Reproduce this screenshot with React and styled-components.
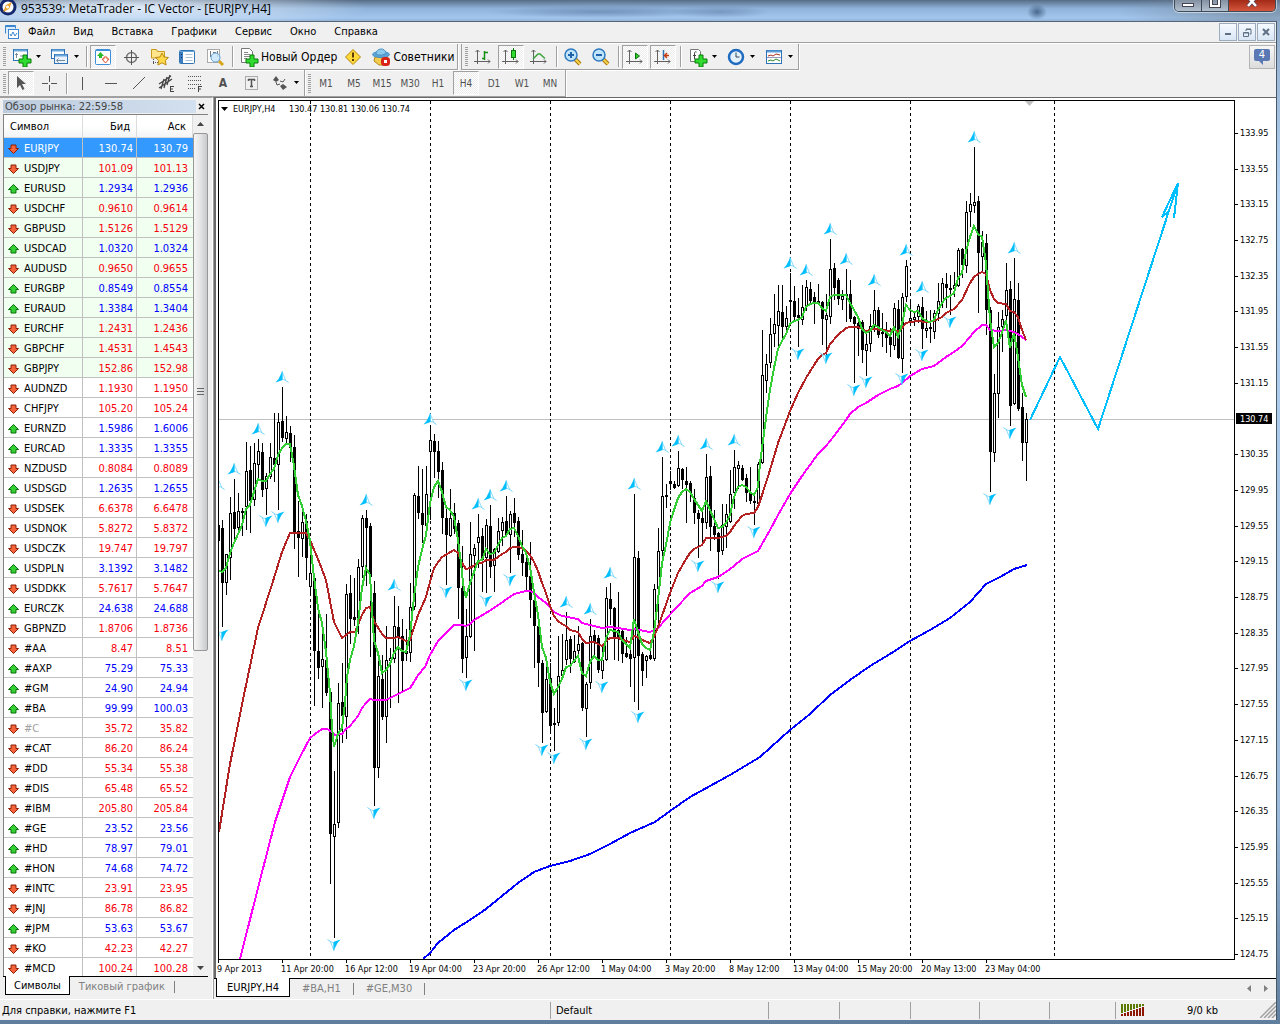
import React, { useState } from 'react';
import styled, { createGlobalStyle, css } from 'styled-components';

const GlobalStyle = createGlobalStyle`
  * { box-sizing: border-box; }
  body {
    margin: 0;
    overflow: hidden;
    background: #f0f0f0;
    color: #000;
    font-family: "DejaVu Sans Condensed", "Noto Sans", sans-serif;
    font-size: 11px;
  }
  button, input { font: inherit; color: inherit; }
  svg { display: block; flex: none; }
`;

const Window = styled.div`
  display: flex;
  flex-direction: column;
  height: 100vh;
  background: linear-gradient(#8fa9c6, #b4d4f4 20%, #9bb9d8 80%, #5f7d9d);
`;

/* ---------- title bar ---------- */
const TitleBar = styled.header`
  display: flex;
  flex: none;
  align-items: flex-start;
  height: 21px;
  overflow: hidden;
  font-family: "Open Sans", "Noto Sans", sans-serif;
  font-size: 12px;
  background:
    radial-gradient(ellipse 240px 22px at 130px 8px, rgba(235, 243, 252, 0.9), transparent),
    radial-gradient(ellipse 110px 6px at 600px 12px, rgba(60, 90, 130, 0.4), transparent),
    radial-gradient(ellipse 50px 6px at 720px 12px, rgba(60, 90, 130, 0.35), transparent),
    radial-gradient(ellipse 10px 8px at 1037px 12px, rgba(20, 50, 80, 0.6), transparent),
    radial-gradient(ellipse 140px 22px at 1260px 12px, rgba(120, 140, 160, 0.8), transparent),
    linear-gradient(#566c85, #8fb2d9 40%, #a3c6ee 85%, #93b3d6);
`;

const TitleText = styled.h1`
  flex: 1;
  margin: 0 0 0 4px;
  font-size: 12px;
  font-weight: 400;
  line-height: 17px;
`;

const CaptionButtons = styled.div`
  display: flex;
  height: 12px;
  margin-right: 4px;
  border: 1px solid #3d4a58;
  border-top: 0;
  border-radius: 0 0 5px 5px;
  overflow: hidden;
  box-shadow: 0 0 0 1px rgba(255, 255, 255, 0.5);
`;

const CaptionButton = styled.button`
  display: flex;
  justify-content: center;
  width: ${p => (p.$close ? 46 : 27)}px;
  padding: 0;
  border: 0;
  border-right: 1px solid #3d4a58;
  background: ${p => (p.$close ? 'linear-gradient(#a32a16, #d4553d)' : 'linear-gradient(#8290a2, #b3c0ce)')};
  &:last-child { border-right: 0; }
`;

const Frame = styled.main`
  display: flex;
  flex: 1;
  flex-direction: column;
  min-height: 0;
  margin: 0 3px 4px 0;
  border-top: 1px solid #566579;
  border-right: 1px solid #46586c;
  background: #f0f0f0;
`;

/* ---------- menu ---------- */
const MenuBar = styled.nav`
  display: flex;
  flex: none;
  align-items: center;
  height: 21px;
  padding: 0 1px 0 5px;
  border-bottom: 1px solid #a0a0a0;
`;

const MenuItems = styled.div`
  display: flex;
  gap: 18px;
  margin-left: 9px;
`;

const MenuItem = styled.button`
  padding: 0;
  border: 0;
  background: none;
  line-height: 16px;
`;

const MdiButtons = styled.div`
  display: flex;
  gap: 1px;
  margin-left: auto;
`;

const MdiButton = styled.button`
  display: flex;
  align-items: center;
  justify-content: center;
  width: 18px;
  height: 18px;
  padding: 0;
  border: 1px solid #9dacbc;
  background: linear-gradient(#f6faff, #d9e6f5);
`;

/* ---------- toolbars ---------- */
const ToolRow = styled.div`
  display: flex;
  flex: none;
  height: 27px;
  border-top: ${p => (p.$first ? '1px solid #fff' : 0)};
`;

const ToolGroup = styled.div`
  display: flex;
  align-items: center;
  margin-left: ${p => (p.$spaced ? 3 : 0)}px;
  padding-left: 3px;
  border-left: ${p => (p.$spaced ? '1px solid #a0a0a0' : 0)};
  border-right: 1px solid #a0a0a0;
  border-bottom: 1px solid #a0a0a0;
  box-shadow: 1px 1px 0 #fff;
`;

const Grip = styled.span`
  width: 3px;
  height: 19px;
  margin-right: 2px;
  background: repeating-linear-gradient(#a0a0a0 0 1px, transparent 1px 2px);
`;

const Sep = styled.span`
  width: 2px;
  height: 21px;
  margin: 0 2px;
  border-left: 1px solid #a0a0a0;
  border-right: 1px solid #fff;
`;

const pressed = css`
  border-color: #a0a0a0 #fff #fff #a0a0a0;
  background: repeating-conic-gradient(#fff 0 25%, #ececec 0 50%) 0 0 / 2px 2px;
`;

const ToolButton = styled.button`
  display: flex;
  flex: none;
  align-items: center;
  justify-content: center;
  gap: 4px;
  width: ${p => (p.$wide ? 38 : 26)}px;
  height: 24px;
  margin-right: ${p => (p.$wide ? 0 : 2)}px;
  padding: 0;
  border: 1px solid transparent;
  background: none;
  color: #505050;
  font-size: 10px;
  ${p => p.$pressed && pressed}
`;

const LabelButton = styled(ToolButton)`
  gap: 2px;
  width: auto;
  margin: 0;
  padding: 0 2px;
  color: #000;
  font-size: 12px;
`;

const Caret = () => (
  <svg width="6" height="4" aria-hidden="true"><path d="M0 0h5l-2.500 3z" fill="#000" /></svg>
);

/* ---------- body ---------- */
const Body = styled.div`
  display: flex;
  flex: 1;
  min-height: 0;
`;

const Side = styled.aside`
  display: flex;
  flex: none;
  flex-direction: column;
  width: 213px;
  padding: 1px 4px 5px 3px;
  border-top: 1px solid #a0a0a0;
  border-right: 1px solid #fff;
`;

const SideTitle = styled.div`
  display: flex;
  align-items: center;
  justify-content: space-between;
  height: 15px;
`;

const SideCaption = styled.h2`
  width: 193px;
  margin: 0;
  padding-left: 2px;
  background: linear-gradient(90deg, #bccbdd, #d2e0ef);
  color: #444;
  font-size: 11px;
  font-weight: 400;
  line-height: 13px;
`;

const CloseX = styled.button`
  width: 10px;
  height: 12px;
  padding: 0;
  border: 0;
  background: none;
`;

const WatchBox = styled.div`
  display: flex;
  flex: 1 1 0;
  min-height: 0;
  overflow: hidden;
  border-top: 1px solid #828282;
  border-left: 1px solid #828282;
`;

const QuoteTable = styled.table`
  width: 189px;
  table-layout: fixed;
  align-self: flex-start;
  border-collapse: separate;
  border-spacing: 0;
`;

const HeadCell = styled.th`
  width: ${p => p.$w}px;
  height: 23px;
  padding: 0 ${p => (p.$right ? 6 : 0)}px 0 ${p => (p.$right ? 0 : 6)}px;
  border-right: 1px solid #dcdcdc;
  border-bottom: 1px solid #d5d5d5;
  background: linear-gradient(#fff, #fff 50%, #f3f4f6);
  font-weight: 400;
  text-align: ${p => (p.$right ? 'right' : 'left')};
`;

const Cell = styled.td`
  height: 20px;
  padding: 2px ${p => (p.$last ? 5 : 3)}px 0 0;
  border-right: ${p => (p.$last ? 0 : '1px solid #c0c0c0')};
  border-bottom: 1px solid #c0c0c0;
  text-align: right;
  line-height: 17px;
`;

const SymbolCell = styled(Cell)`
  text-align: left;
  & > span { display: flex; align-items: center; gap: 5px; padding-left: 4px; }
`;

const Row = styled.tr`
  background: ${p => (p.$selected ? '#3399ff' : p.$major ? '#f0fff0' : '#fff')};
  color: ${p => (p.$selected ? '#fff' : p.$up ? '#0000ff' : '#f8000c')};
  ${SymbolCell} { color: ${p => (p.$selected ? '#fff' : p.$muted ? '#a0a0a0' : '#000')}; }
`;

const ScrollTrack = styled.div`
  display: flex;
  flex-direction: column;
  align-items: center;
  justify-content: space-between;
  width: 16px;
  padding: 7px 0 5px;
  background: #f0f0f0;
`;

const Thumb = styled.div`
  display: flex;
  align-items: center;
  justify-content: center;
  width: 15px;
  height: 61%;
  margin-top: 6px;
  margin-bottom: auto;
  border: 1px solid #979797;
  border-radius: 2px;
  background: linear-gradient(90deg, #f5f5f5, #e4e4e6 50%, #c8c9cc);
`;

const TabStrip = styled.div`
  display: flex;
  flex: none;
  height: ${p => (p.$side ? 18 : 19)}px;
  border-top: 1px solid #000;
  padding-left: 2px;
`;

const Tab = styled.button`
  height: ${p => (p.$active ? 19 : 17)}px;
  margin-top: ${p => (p.$active ? -1 : 1)}px;
  padding: 0 ${p => p.$pad}px;
  border: 1px solid ${p => (p.$active ? '#000' : 'transparent')};
  border-top: 0;
  background: ${p => (p.$active ? '#fff' : 'none')};
  color: ${p => (p.$active ? '#000' : '#808080')};
  white-space: nowrap;
  line-height: 15px;
`;

const TabDivider = styled.span`
  width: 1px;
  height: 12px;
  margin-top: 4px;
  background: #808080;
`;

const TabScroll = styled.span`
  display: flex;
  gap: 12px;
  align-items: center;
  margin: 0 7px 0 auto;
`;

const ChartPane = styled.section`
  display: flex;
  flex: 1;
  flex-direction: column;
  min-width: 0;
  padding-bottom: 2px;
  border-top: 1px solid #696969;
  border-left: 1px solid #a0a0a0;
`;

const ChartBox = styled.div`
  flex: 1;
  min-height: 0;
  border-left: 2px solid #696969;
  background: #fff;
  & > svg { width: 100%; height: 100%; }
`;

/* ---------- status bar ---------- */
const StatusBar = styled.footer`
  display: flex;
  flex: none;
  align-items: center;
  height: 21px;
  border-top: 1px solid #fff;
`;

const StatusField = styled.div`
  display: flex;
  flex: ${p => (p.$w ? 'none' : 1)};
  align-items: center;
  width: ${p => (p.$w ? p.$w + 'px' : 'auto')};
  height: 17px;
  padding-left: ${p => (p.$w ? 5 : 2)}px;
  border-left: ${p => (p.$w ? '1px solid #a0a0a0' : 0)};
`;

const Traffic = styled.span`
  flex: 1;
  text-align: center;
`;

/* ---------- data ---------- */
// symbol, bid, ask, 1 = price went up
const quotes = [
  ['EURJPY', '130.74', '130.79', 0], ['USDJPY', '101.09', '101.13', 0], ['EURUSD', '1.2934', '1.2936', 1],
  ['USDCHF', '0.9610', '0.9614', 0], ['GBPUSD', '1.5126', '1.5129', 0], ['USDCAD', '1.0320', '1.0324', 1],
  ['AUDUSD', '0.9650', '0.9655', 0], ['EURGBP', '0.8549', '0.8554', 1], ['EURAUD', '1.3384', '1.3404', 1],
  ['EURCHF', '1.2431', '1.2436', 0], ['GBPCHF', '1.4531', '1.4543', 0], ['GBPJPY', '152.86', '152.98', 0],
  ['AUDNZD', '1.1930', '1.1950', 0], ['CHFJPY', '105.20', '105.24', 0], ['EURNZD', '1.5986', '1.6006', 1],
  ['EURCAD', '1.3335', '1.3355', 1], ['NZDUSD', '0.8084', '0.8089', 0], ['USDSGD', '1.2635', '1.2655', 1],
  ['USDSEK', '6.6378', '6.6478', 0], ['USDNOK', '5.8272', '5.8372', 0], ['USDCZK', '19.747', '19.797', 0],
  ['USDPLN', '3.1392', '3.1482', 1], ['USDDKK', '5.7617', '5.7647', 0], ['EURCZK', '24.638', '24.688', 1],
  ['GBPNZD', '1.8706', '1.8736', 0], ['#AA', '8.47', '8.51', 0], ['#AXP', '75.29', '75.33', 1],
  ['#GM', '24.90', '24.94', 1], ['#BA', '99.99', '100.03', 1], ['#C', '35.72', '35.82', 0],
  ['#CAT', '86.20', '86.24', 0], ['#DD', '55.34', '55.38', 0], ['#DIS', '65.48', '65.52', 0],
  ['#IBM', '205.80', '205.84', 0], ['#GE', '23.52', '23.56', 1], ['#HD', '78.97', '79.01', 1],
  ['#HON', '74.68', '74.72', 1], ['#INTC', '23.91', '23.95', 0], ['#JNJ', '86.78', '86.82', 0],
  ['#JPM', '53.63', '53.67', 1], ['#KO', '42.23', '42.27', 0], ['#MCD', '100.24', '100.28', 0],
];

// high, body top, body bottom, low (chart y), 1 = rising bar
const bars = [
  [493,525,541,542,0],[520,528,583,627,0],[554,554,583,595,1],[497,513,558,580,1],[479,512,529,541,0],
  [493,511,528,532,1],[508,511,513,536,0],[442,471,507,530,1],[446,470,501,533,0],[443,463,500,506,1],
  [439,451,465,480,1],[443,452,490,497,0],[473,476,489,515,1],[443,457,477,479,1],[413,458,465,482,0],
  [413,422,465,510,1],[387,421,438,442,0],[416,432,439,445,1],[426,433,448,462,0],[435,447,532,549,0],
  [501,531,538,577,0],[505,522,539,557,1],[514,521,558,580,0],[547,573,587,596,1],[573,578,651,706,0],
  [610,651,668,679,0],[630,659,667,708,1],[614,660,693,696,0],[690,692,834,884,0],[771,824,837,938,1],
  [683,703,823,828,1],[663,702,716,743,0],[584,594,717,739,1],[575,593,619,644,0],[578,617,620,626,0],
  [559,567,618,634,1],[515,518,567,578,1],[510,518,528,586,0],[523,526,577,657,0],[581,593,768,806,0],
  [655,676,768,778,1],[655,679,717,720,0],[626,660,717,743,1],[648,658,661,708,1],[596,626,659,663,1],
  [606,627,637,703,0],[619,636,661,691,0],[629,651,654,661,1],[583,607,653,662,1],[493,495,607,610,1],
  [466,496,513,519,0],[469,513,525,543,0],[466,494,526,530,1],[428,440,452,520,1],[434,441,452,478,0],
  [441,451,472,498,0],[462,470,518,534,0],[509,518,535,585,0],[489,518,536,537,1],[503,513,529,534,0],
  [520,523,588,619,0],[546,588,659,673,0],[609,636,658,678,1],[522,554,637,638,1],[544,548,556,651,1],
  [514,537,543,568,1],[528,536,560,592,0],[519,525,558,593,1],[505,526,567,578,0],[548,549,566,592,1],
  [518,531,552,553,1],[517,522,531,546,1],[496,521,535,535,0],[511,514,535,573,1],[498,513,523,537,0],
  [517,521,555,560,0],[530,554,563,576,0],[550,562,577,592,0],[542,576,600,618,0],[591,600,626,668,0],
  [613,626,663,687,0],[660,663,713,743,0],[663,679,712,713,1],[663,678,726,732,0],[708,723,725,751,0],
  [636,676,723,726,1],[634,670,676,680,1],[612,640,660,665,1],[636,639,659,673,0],[635,651,662,663,1],
  [626,644,651,657,1],[642,643,708,711,0],[682,684,709,737,1],[619,636,683,689,1],[630,635,642,656,0],
  [635,638,670,673,0],[646,660,671,679,1],[587,598,660,661,1],[583,599,609,625,0],[607,608,637,660,0],
  [592,630,637,661,0],[628,631,654,663,0],[637,653,657,658,0],[650,654,659,687,0],[494,557,658,702,1],
  [551,558,656,710,0],[652,654,671,686,0],[655,656,661,678,1],[650,655,659,660,0],[584,589,659,661,1],
  [528,551,589,625,1],[457,496,551,560,1],[484,495,497,508,0],[471,481,484,490,0],[481,484,488,489,0],
  [451,468,486,487,1],[468,469,480,489,0],[467,481,485,523,0],[481,483,493,502,0],[489,498,513,524,0],
  [510,513,519,558,0],[512,518,523,546,0],[454,477,523,529,1],[466,476,527,551,0],[510,526,535,540,0],
  [532,533,552,579,0],[504,525,551,555,1],[504,514,527,548,1],[470,494,522,523,1],[450,467,493,509,1],
  [461,465,469,489,1],[465,468,480,481,0],[474,478,493,502,0],[467,493,501,504,0],[493,501,503,525,0],
  [462,464,504,507,1],[330,375,463,464,1],[354,364,381,393,1],[318,334,363,368,1],[294,324,334,347,1],
  [285,311,326,348,1],[285,312,327,338,0],[306,318,327,335,1],[273,300,302,325,0],[286,301,317,322,0],
  [298,315,318,347,0],[285,307,320,325,1],[280,287,307,311,1],[282,289,301,303,0],[292,297,303,324,0],
  [284,301,304,305,0],[301,302,319,345,0],[294,315,320,355,1],[239,269,317,324,1],[263,268,288,300,0],
  [278,280,299,305,0],[290,296,300,310,1],[269,294,296,322,0],[280,294,319,322,0],[316,317,324,383,0],
  [322,323,329,356,0],[320,322,350,363,0],[333,344,351,376,1],[314,326,344,352,1],[290,310,326,332,1],
  [307,310,335,338,0],[313,332,334,347,1],[322,333,338,353,0],[328,337,345,357,0],[303,308,346,350,1],
  [300,309,358,359,0],[293,297,359,373,1],[260,266,297,302,1],[300,318,321,325,1],[312,317,320,326,1],
  [304,306,317,323,1],[297,307,329,349,0],[311,328,331,338,1],[310,327,329,343,1],[310,313,332,339,1],
  [283,301,314,321,1],[278,283,302,308,1],[273,284,288,308,0],[275,288,290,315,0],[272,285,289,297,1],
  [248,250,286,287,1],[248,249,265,278,0],[201,212,266,273,1],[193,204,212,227,1],[147,202,206,213,1],
  [196,201,253,313,0],[231,242,257,273,1],[234,243,310,335,0],[307,310,452,492,0],[374,393,453,462,1],
  [312,327,394,418,1],[310,319,327,352,1],[263,290,316,320,1],[281,289,406,426,0],[258,299,404,405,1],
  [283,300,409,411,0],[393,407,443,461,0],[413,419,443,481,1],
];

const averages = [
  { color: '#0000ff', points: '423,959 430,953 438,943 454,930 470,920 486,909 502,896 518,883 534,872 550,866 570,861 590,854 610,844 630,833 655,822 670,811 690,797 710,786 730,775 760,757 780,739 790,730 810,714 830,695 850,680 870,666 890,654 910,641 930,630 950,618 970,602 986,584 1000,577 1014,569 1027,565' },
  { color: '#ff00ff', points: '240,959 260,880 275,822 290,777 300,757 310,738 315,734 322,729 327,729 332,732 335,735 342,734 346,729 350,726 354,721 358,716 362,708 366,703 370,699 374,700 386,700 390,698 410,688 414,682 418,675 425,667 430,655 438,641 446,633 454,625 462,625 466,626 470,624 474,620 486,613 494,608 514,594 526,591 530,591 534,593 538,597 546,603 554,612 562,616 578,619 582,623 602,628 610,627 618,628 630,630 634,629 650,632 658,628 675,609 690,593 702,586 706,581 718,577 726,572 734,566 742,559 758,551 762,544 770,530 778,515 790,494 802,476 818,454 826,446 834,436 846,420 850,414 858,407 866,403 878,395 890,389 898,386 902,383 910,376 922,369 934,366 946,357 954,352 962,346 970,337 974,332 982,325 986,325 990,330 998,331 1006,330 1014,332 1018,334 1022,337 1026,340' },
  { color: '#b22222', points: '219,832 230,764 245,690 258,628 274,578 282,552 290,533 306,533 310,540 318,559 326,580 334,622 342,638 350,632 355,632 362,615 366,608 370,607 374,621 382,634 386,638 394,638 398,637 406,641 410,640 418,615 426,597 430,582 434,568 442,557 454,550 458,553 462,563 466,569 470,568 478,563 482,563 486,560 494,560 502,554 506,552 510,548 514,547 518,547 522,548 526,551 530,555 534,562 538,571 542,583 546,593 550,606 554,616 558,621 562,624 566,626 570,630 578,632 582,639 586,643 594,642 602,646 606,641 610,638 618,638 626,641 630,642 634,636 638,637 642,640 650,643 654,637 658,627 670,593 678,573 686,559 690,553 694,549 702,545 706,538 718,538 726,536 730,532 734,526 742,516 746,514 754,513 758,507 762,495 770,470 778,443 786,422 790,411 798,393 806,378 814,365 818,359 822,355 826,353 830,344 838,335 846,328 850,327 858,327 862,329 866,331 874,329 882,330 890,331 894,329 898,332 902,328 906,323 910,322 918,321 926,322 934,321 942,317 946,313 954,309 962,300 970,283 974,277 978,274 982,272 986,274 990,290 994,299 998,303 1006,304 1010,311 1014,312 1018,317 1022,330 1026,340' },
  { color: '#32cd32', points: '218,570 222,572 226,568 230,553 234,543 238,534 242,525 246,509 250,505 254,492 258,479 262,481 266,481 270,474 274,469 278,455 282,448 286,444 290,444 294,466 298,495 302,506 306,521 310,541 314,577 318,608 322,623 326,652 330,693 332,727 334,747 338,734 342,728 345,703 347,677 350,660 354,646 358,623 362,588 366,568 370,575 372,610 374,640 378,653 382,673 386,670 390,664 394,653 398,647 402,651 406,652 410,635 414,597 418,567 422,550 426,535 430,503 434,487 438,481 442,492 446,507 450,510 454,517 458,540 461,563 463,583 466,598 470,583 474,572 478,561 482,560 486,549 490,554 494,553 498,545 502,538 506,536 510,529 514,528 518,536 522,546 526,553 530,567 534,592 538,615 542,647 546,658 550,682 554,694 558,687 562,679 566,667 570,666 574,661 578,656 582,673 586,676 590,662 594,656 598,660 602,660 606,638 610,630 614,631 618,632 622,640 626,644 630,648 634,619 638,632 642,644 646,648 650,650 654,632 658,600 662,563 666,545 670,523 674,510 678,498 682,492 686,489 690,492 694,499 698,505 702,511 706,501 710,510 714,519 718,528 722,527 726,523 730,515 734,497 738,487 742,485 746,487 750,492 754,495 758,487 760,463 762,448 766,418 770,390 774,368 778,349 782,341 786,334 790,324 794,321 798,320 802,317 806,307 810,304 814,303 818,303 822,308 826,311 830,297 834,295 846,295 850,303 854,310 858,317 862,329 866,333 870,331 874,325 878,327 882,330 886,332 890,336 894,327 898,337 902,324 906,305 910,310 914,312 918,311 922,318 926,321 930,322 934,320 938,310 942,303 946,298 950,296 954,293 958,278 962,273 966,251 970,237 974,226 978,234 982,237 986,263 990,320 994,347 998,343 1002,333 1006,320 1010,348 1014,333 1018,357 1022,385 1026,397' },
];

const fractalsUp = [[218,484],[234,469],[258,429],[282,377],[366,500],[394,585],[430,419],[478,504],[490,495],[506,486],[566,602],[590,609],[610,573],[634,484],[662,447],[678,441],[706,444],[734,440],[790,263],[806,270],[830,229],[846,259],[874,280],[906,250],[922,287],[974,137],[1014,248]];
const fractalsDown = [[222,635],[266,521],[278,517],[334,945],[374,813],[446,592],[466,685],[486,601],[510,580],[542,750],[554,758],[586,744],[602,687],[638,717],[698,566],[718,587],[754,532],[798,354],[826,358],[854,390],[866,382],[902,379],[922,355],[950,322],[990,499],[1010,433]];

const weekLines = [310, 430, 550, 670, 790, 910, 1054];
const times = ['9 Apr 2013', '11 Apr 20:00', '16 Apr 12:00', '19 Apr 04:00', '23 Apr 20:00', '26 Apr 12:00', '1 May 04:00', '3 May 20:00', '8 May 12:00', '13 May 04:00', '15 May 20:00', '20 May 13:00', '23 May 04:00'];

const TOP_PRICE = 133.95;
const priceY = price => Math.round(133 + (TOP_PRICE - price) * 89.24);
const prices = Array.from({ length: 24 }, (_, i) => TOP_PRICE - i * 0.4).filter((_, i) => i !== 8);

/* ---------- chart ---------- */
function Fractal({ x, y, down }) {
  return (
    <g transform={`translate(${x} ${y})${down ? ' rotate(180)' : ''}`}>
      <path d="M0-5.500L3.500 3L0 2.500z" fill="#fff" stroke="#8fdcfb" />
      <path d="M3 3L6.500 5.500" stroke="#6fd2fa" />
      <path d="M.5-6L-3.500 2L-6.500 5.500L-2 4L.5 3z" fill="#00bfff" />
    </g>
  );
}

function Chart() {
  return (
    <svg viewBox="216 98 1060 880" preserveAspectRatio="xMinYMin meet" role="img" aria-label="EURJPY,H4" fontSize="9">
      <defs>
        <clipPath id="plot"><rect x="218" y="100" width="1016" height="859" /></clipPath>
      </defs>
      <g clipPath="url(#plot)">
        <g shapeRendering="crispEdges">
          <path d="M218 419.500H1234" stroke="#c0c0c0" />
          {weekLines.map(x => <path key={x} d={`M${x + 0.5} 101V959`} stroke="#000" strokeDasharray="3 3" />)}
          {bars.map(([high, top, bottom, low, up], i) => {
            const x = 218 + i * 4;
            return (
              <g key={i}>
                <path d={`M${x + 0.5} ${high}V${low}`} stroke="#000" />
                {up
                  ? <rect x={x - 0.5} y={top + 0.5} width="2" height={Math.max(bottom - top - 1, 1)} fill="#fff" stroke="#000" />
                  : <rect x={x - 1} y={top} width="3" height={bottom - top} />}
              </g>
            );
          })}
          {averages.map(a => <polyline key={a.color} points={a.points} fill="none" stroke={a.color} strokeWidth="2" />)}
          <path d="M1030 420L1060 357L1098 429L1178 183M1162 217L1178 183L1174 218M1162 217L1168 212" fill="none" stroke="#00bfff" strokeWidth="2" />
        </g>
        {fractalsUp.map(([x, y]) => <Fractal key={x} x={x} y={y} />)}
        {fractalsDown.map(([x, y]) => <Fractal key={x} x={x} y={y} down />)}
        <path d="M1025 101h9l-4.500 5z" fill="#c0c0c0" />
      </g>
      <g shapeRendering="crispEdges">
        <path d="M218.500 100.500H1234.500V959.500H218.500z" fill="none" stroke="#000" />
        {times.map((t, i) => <path key={t} d={`M${218.5 + i * 64} 960v3`} stroke="#000" />)}
        {prices.map(p => <path key={p} d={`M1235 ${priceY(p) + 0.5}h3`} stroke="#000" />)}
        <rect x="1236" y="413" width="36" height="11" />
      </g>
      <path d="M221 107h7l-3.500 4z" />
      <text x="233" y="112">EURJPY,H4</text>
      <text x="289" y="112">130.47 130.81 130.06 130.74</text>
      {times.map((t, i) => <text key={t} x={217 + i * 64} y="972">{t}</text>)}
      {prices.map(p => <text key={p} x="1240" y={priceY(p) + 3}>{p.toFixed(2)}</text>)}
      <text x="1240" y="422" fill="#fff">130.74</text>
    </svg>
  );
}

/* ---------- icons ---------- */
const Icon = ({ size = 20, children }) => (
  <svg width={size} height={size} viewBox="0 0 20 20" fill="none" aria-hidden="true">{children}</svg>
);

const Plus = () => <path d="M11 8h4v4h4v4h-4v4h-4v-4H7v-4h4z" fill="#2fdc2f" stroke="#087a08" />;
const Axes = () => <path d="M4.500 3v14M1 14.500h16M2.500 5l2-2 2 2M15 12.500l2 2-2 2" stroke="#606060" />;
const Lens = ({ minus }) => (
  <>
    <path d="M12 12l5 5" stroke="#a8780a" strokeWidth="4" />
    <path d="M12 12l5 5" stroke="#f7d34c" strokeWidth="2" />
    <circle cx="8" cy="8" r="6" fill="#bfe4fb" stroke="#2f79bf" strokeWidth="1.500" />
    <path d={minus ? 'M5 8h6' : 'M5 8h6M8 5v6'} stroke="#1f62ad" strokeWidth="2" />
  </>
);
const Arrow = ({ up }) => (
  <svg width="11" height="10" viewBox="0 0 11 10" aria-hidden="true">
    <path d={up ? 'M5.500.5l5 5H8v3.500H3V5.500H.5z' : 'M5.500 9.500l5-5H8V1H3v3.500H.5z'} fill={up ? '#35cf35' : '#f4633a'} stroke={up ? '#087008' : '#8c1f04'} />
  </svg>
);

const icons = {
  newChart: <Icon><rect x="1.500" y="2.500" width="14" height="11" fill="#fff" stroke="#2d73b5" /><path d="M2 3.500h13" stroke="#6aa8dc" strokeWidth="2" /><path d="M4.500 6v5M3 7.500h3M8 9h3" stroke="#789" /><Plus /></Icon>,
  profiles: <Icon><rect x="1.500" y="2.500" width="13" height="9" fill="#fff" stroke="#2d73b5" /><path d="M2 3.500h12" stroke="#6aa8dc" strokeWidth="2" /><rect x="4.500" y="7.500" width="13" height="9" fill="#e8f3fd" stroke="#2d73b5" /><path d="M5 8.500h12" stroke="#6aa8dc" strokeWidth="2" /><path d="M7 13.500h8M8.500 11.500l-2 2 2 2" stroke="#789" /></Icon>,
  watch: <Icon><rect x="2.500" y="2.500" width="15" height="15" rx="1" fill="#fff" stroke="#3b8ed8" /><path d="M3 3.500h14" stroke="#3b8ed8" /><path d="M4 9l3.500-4 3.500 4H9v2H6V9z" fill="#29b929" /><path d="M9 12l3.500 4 3.500-4h-2v-2h-3v2z" fill="#fff" stroke="#e0502a" /></Icon>,
  target: <Icon><circle cx="10.500" cy="10.500" r="5" stroke="#777" strokeWidth="1.500" /><path d="M10.500 3v15M3 10.500h15" stroke="#555" /></Icon>,
  favorites: <Icon><path d="M2.500 11V2.500h5l1 2h7V11z" fill="#ffe58c" stroke="#c99a1c" /><path d="M4.500 12v6M4 15.500h5" stroke="#555" strokeDasharray="1 1" /><path d="M13 6l2 4 4.500.5-3.200 3 .8 4.500-4.100-2.200L8.900 18l.8-4.500-3.200-3L11 10z" fill="#ffd94a" stroke="#bb8a12" /></Icon>,
  terminal: <Icon><rect x="2.500" y="3.500" width="15" height="13" rx="1" fill="#fff" stroke="#2d73b5" /><rect x="3" y="4" width="3" height="12" fill="#3c7fc0" /><path d="M3 4.500h14" stroke="#6aa8dc" /><path d="M8.500 7.500h7M8.500 10.500h7M8.500 13.500h7" stroke="#a9c3da" /><path d="M4 7.500h1M4 10.500h1" stroke="#102b55" /></Icon>,
  tester: <Icon><rect x="2.500" y="2.500" width="12" height="13" fill="#fff" stroke="#aaa" /><path d="M5.500 4v6M12.500 4v6M8 5.500h3" stroke="#777" /><path d="M14 14l4 4" stroke="#d8a51a" strokeWidth="3" /><circle cx="10.500" cy="10.500" r="4.500" fill="#c9e6fb" fillOpacity=".85" stroke="#5f9fd4" /></Icon>,
  order: <Icon><path d="M2.500 1.500h8l3 3v11h-11z" fill="#fff" stroke="#777" /><path d="M5 5.500h4M5 7.500h6M5 9.500h6M5 11.500h3" stroke="#888" /><Plus /></Icon>,
  warning: <Icon><path d="M10 2.500l7.500 7.500-7.500 7.500L2.500 10z" fill="#ffd83a" stroke="#b4860c" strokeLinejoin="round" /><path d="M10 5.500v5M10 12v2" stroke="#5d3a04" strokeWidth="2" /></Icon>,
  advisors: <Icon><path d="M4 10l-1 4 5 4h6l2-8z" fill="#f4cc4d" stroke="#b48819" /><ellipse cx="10" cy="7.500" rx="8.500" ry="3" fill="#5da4d6" stroke="#4b93c8" /><path d="M5 7c0-6 9-7 10-1-2 2-7 3-10 1z" fill="#8cc8ec" stroke="#4b93c8" /><rect x="10" y="10" width="9" height="9" rx="3.500" fill="#d92318" /><rect x="13" y="13" width="3" height="3" fill="#fff" /></Icon>,
  barChart: <Icon><Axes /><path d="M11.500 4v9M9 11.500h2M12 5.500h3" stroke="#129012" strokeWidth="1.500" /></Icon>,
  candles: <Icon><Axes /><path d="M12.500 1v12" stroke="#0c780c" /><rect x="10.500" y="3.500" width="4" height="7" fill="#2fdc2f" stroke="#0c780c" /></Icon>,
  lineChart: <Icon><Axes /><path d="M4 12l5-5h2l5 4.500" stroke="#3aa53a" strokeWidth="1.500" /></Icon>,
  zoomIn: <Icon><Lens /></Icon>,
  zoomOut: <Icon><Lens minus /></Icon>,
  scroll: <Icon><Axes /><path d="M10.500 6v6l4-3z" fill="#2fc92f" stroke="#0c780c" /></Icon>,
  shift: <Icon><Axes /><path d="M10.500 3v10" stroke="#2d73b5" strokeWidth="1.500" /><path d="M16 8.500h-4M14 6l-2.500 2.500L14 11" stroke="#c63a10" strokeWidth="1.500" /></Icon>,
  indicators: <Icon><path d="M2.500 2.500h8l2 2v10h-10z" fill="#fff" stroke="#777" /><path d="M8.500 5c-2-1-2 1-2 2v5M5 8.500h3" stroke="#444" /><Plus /></Icon>,
  clock: <Icon><circle cx="10" cy="10" r="7" fill="#e4f2fd" stroke="#1f6bc0" strokeWidth="2.500" /><path d="M10 5.500V10h3.500" stroke="#345" /></Icon>,
  template: <Icon><rect x="2.500" y="3.500" width="15" height="13" fill="#fff" stroke="#2d73b5" /><path d="M3 4.500h14" stroke="#5d9fd8" strokeWidth="2" /><path d="M4 9l3-1 2 1 3-2 4 1" stroke="#a83222" /><path d="M4 14l3-1 2 1 3-2 4 2" stroke="#2a8a2a" /><path d="M3 10.500h14" stroke="#99b" /></Icon>,
  cursor: <Icon><path d="M6 3v12l3-3 2.500 5 2-1-2.500-5h4z" fill="#555" /></Icon>,
  cross: <Icon><path d="M10.500 3v6M10.500 12v6M3 10.500h6M12 10.500h6" stroke="#555" /></Icon>,
  vline: <Icon><path d="M9.500 4v13" stroke="#555" /></Icon>,
  hline: <Icon><path d="M4 10.500h12" stroke="#555" /></Icon>,
  trend: <Icon><path d="M4 16L16 4" stroke="#555" /></Icon>,
  channel: <Icon><path d="M2 11L14 3M2 15L15 6M4 16l3-10M7 15l3-11M10 12l3-10" stroke="#444" strokeWidth="1.300" /><path d="M13 13.500h4M13 16h3M13 18.500h4M13.500 13v6" stroke="#444" /></Icon>,
  fibo: <Icon><path d="M3 3.500h14M3 7.500h14M3 11.500h14M3 15.500h8" stroke="#555" strokeDasharray="1 1" /><path d="M13 13.500h4M13 16h3M13.500 13v6" stroke="#444" /></Icon>,
  label: <Icon><rect x="4.500" y="3.500" width="12" height="13" stroke="#666" strokeDasharray="1 1" /><path d="M7 6.500h7M10.500 6v8M7.500 6v2M13.500 6v2M9 13.500h3" stroke="#555" strokeWidth="1.500" /></Icon>,
  marks: <Icon><path d="M3 7l3-4 3 4-3 2zM10 13l3-2 4 3-4 3z" fill="#555" /><path d="M6 9l1 3 3-1M10 8l3 1 2-3" stroke="#555" /></Icon>,
};

const timeframes = ['M1', 'M5', 'M15', 'M30', 'H1', 'H4', 'D1', 'W1', 'MN'];
const drawTools = [['Вертикальная линия', 'vline'], ['Горизонтальная линия', 'hline'], ['Трендовая линия', 'trend'], ['Канал', 'channel'], ['Фибоначчи', 'fibo']];

const Tool = ({ icon, name, menu, ...rest }) => (
  <ToolButton aria-label={name} $wide={menu} {...rest}>{icons[icon]}{menu && <Caret />}</ToolButton>
);

const TextA = styled.b`
  font-size: 12px;
`;

const ChatButton = styled.button`
  width: 26px;
  height: 24px;
  margin: 1px 1px 0 auto;
  padding: 0;
  border: 1px solid #b4b4b4;
  background: linear-gradient(#f6f6f6, #dcdcdc);
`;

const Bubble = styled.span`
  display: block;
  width: 16px;
  margin: 0 auto;
  border-radius: 2px;
  background: #5a78b4;
  color: #fff;
  font-size: 11px;
  line-height: 12px;
`;

function Toolbars() {
  const [frame, setFrame] = useState('H4');

  return (
    <>
      <ToolRow $first>
        <ToolGroup>
          <Grip />
          <Tool icon="newChart" name="Новый график" menu />
          <Tool icon="profiles" name="Профили" menu />
          <Sep />
          <Tool icon="watch" name="Обзор рынка" $pressed />
          <Tool icon="target" name="Окно данных" />
          <Tool icon="favorites" name="Навигатор" />
          <Tool icon="terminal" name="Терминал" />
          <Tool icon="tester" name="Тестер" />
          <Sep />
          <LabelButton>{icons.order}Новый Ордер</LabelButton>
          <Tool icon="warning" name="MetaEditor" />
          <LabelButton>{icons.advisors}Советники</LabelButton>
        </ToolGroup>
        <ToolGroup $spaced>
          <Grip />
          <Tool icon="barChart" name="Бары" />
          <Tool icon="candles" name="Свечи" $pressed />
          <Tool icon="lineChart" name="Линия" />
          <Sep />
          <Tool icon="zoomIn" name="Увеличить" />
          <Tool icon="zoomOut" name="Уменьшить" />
          <Sep />
          <Tool icon="scroll" name="Автопрокрутка" $pressed />
          <Tool icon="shift" name="Сдвиг графика" $pressed />
          <Sep />
          <Tool icon="indicators" name="Индикаторы" menu />
          <Tool icon="clock" name="Периоды" menu />
          <Tool icon="template" name="Шаблоны" menu />
        </ToolGroup>
        <ChatButton>
          <Bubble>4</Bubble>
          <svg width="24" height="4" aria-hidden="true"><path d="M9 0h4v4z" fill="#5a78b4" /></svg>
        </ChatButton>
      </ToolRow>
      <ToolRow>
        <ToolGroup>
          <Grip />
          <Tool icon="cursor" name="Курсор" $pressed />
          <Tool icon="cross" name="Перекрестие" />
          <Sep />
          {drawTools.map(([name, icon]) => <Tool key={icon} icon={icon} name={name} />)}
          <ToolButton><TextA>A</TextA></ToolButton>
          <Tool icon="label" name="Текстовая метка" />
          <Tool icon="marks" name="Стрелки" menu />
        </ToolGroup>
        <ToolGroup>
          <Grip />
          {timeframes.map(f => (
            <ToolButton key={f} $pressed={f === frame} onClick={() => setFrame(f)}>{f}</ToolButton>
          ))}
        </ToolGroup>
      </ToolRow>
    </>
  );
}

function MarketWatch() {
  const [selected, setSelected] = useState('EURJPY');

  return (
    <Side>
      <SideTitle>
        <SideCaption>Обзор рынка: 22:59:58</SideCaption>
        <CloseX aria-label="Закрыть">
          <svg width="8" height="8"><path d="M1 1l5 5M6 1l-5 5" stroke="#000" strokeWidth="1.500" /></svg>
        </CloseX>
      </SideTitle>
      <WatchBox>
        <QuoteTable>
          <thead>
            <tr>
              <HeadCell $w={79}>Символ</HeadCell>
              <HeadCell $w={54} $right>Бид</HeadCell>
              <HeadCell $w={56} $right>Аск</HeadCell>
            </tr>
          </thead>
          <tbody>
            {quotes.map(([symbol, bid, ask, up], i) => (
              <Row key={symbol} $selected={symbol === selected} $major={i < 12} $up={up} $muted={symbol === '#C'} onClick={() => setSelected(symbol)}>
                <SymbolCell><span><Arrow up={up} />{symbol}</span></SymbolCell>
                <Cell>{bid}</Cell>
                <Cell $last>{ask}</Cell>
              </Row>
            ))}
          </tbody>
        </QuoteTable>
        <ScrollTrack>
          <svg width="8" height="5"><path d="M0 4l3.500-4L7 4z" fill="#444" /></svg>
          <Thumb>
            <svg width="7" height="9"><path d="M0 1.500h7M0 4.500h7M0 7.500h7" stroke="#666" /></svg>
          </Thumb>
          <svg width="8" height="5"><path d="M0 0l3.500 4L7 0z" fill="#444" /></svg>
        </ScrollTrack>
      </WatchBox>
      <TabStrip $side>
        <Tab $active $pad={8}>Символы</Tab>
        <Tab $pad={8}>Тиковый график</Tab>
        <TabDivider />
      </TabStrip>
    </Side>
  );
}

export default function App() {
  return (
    <Window>
      <GlobalStyle />
      <TitleBar>
        <svg width="17" height="16" viewBox="0 0 17 16">
          <circle cx="8" cy="7" r="7" fill="#fff" stroke="#14286e" strokeWidth="3" />
          <path d="M3 12l3-7 6-3-3 7z" fill="#f0a32a" />
          <circle cx="7.500" cy="7" r="1.500" fill="#fff" />
        </svg>
        <TitleText>953539: MetaTrader - IC Vector - [EURJPY,H4]</TitleText>
        <CaptionButtons>
          <CaptionButton aria-label="Свернуть"><svg width="12" height="8"><rect x=".5" y="3.500" width="11" height="3" fill="#fff" stroke="#445" /></svg></CaptionButton>
          <CaptionButton aria-label="Развернуть"><svg width="12" height="8"><rect x="2" y="-2" width="8" height="8" fill="none" stroke="#445" strokeWidth="4" /><rect x="2" y="-2" width="8" height="8" fill="none" stroke="#fff" strokeWidth="2" /></svg></CaptionButton>
          <CaptionButton $close aria-label="Закрыть"><svg width="12" height="8"><path d="M2-3l8 9M10-3L2 6" stroke="#545" strokeWidth="4" /><path d="M2-3l8 9M10-3L2 6" stroke="#fff" strokeWidth="2.500" /></svg></CaptionButton>
        </CaptionButtons>
      </TitleBar>
      <Frame>
        <MenuBar>
          <svg width="14" height="14" viewBox="0 0 14 14" fill="none">
            <path d="M.5 8.500v-8h10v3" stroke="#3b86cf" fill="#dcecfb" /><path d="M1 1.500h9" stroke="#3b86cf" />
            <rect x="3.500" y="4.500" width="10" height="9" fill="#fff" stroke="#3b86cf" /><path d="M5 9l1 2 2-4 2 4 2-3" stroke="#3b86cf" />
          </svg>
          <MenuItems>
            {['Файл', 'Вид', 'Вставка', 'Графики', 'Сервис', 'Окно', 'Справка'].map(m => <MenuItem key={m}>{m}</MenuItem>)}
          </MenuItems>
          <MdiButtons>
            <MdiButton aria-label="Свернуть окно"><svg width="8" height="8"><path d="M1 6h6" stroke="#607084" strokeWidth="2" /></svg></MdiButton>
            <MdiButton aria-label="Восстановить окно"><svg width="9" height="9" fill="none" stroke="#607084"><path d="M3 3V1.500h5V6H6.500M3 1h5M.5 4.500h5v4h-5zM1 5h5" /></svg></MdiButton>
            <MdiButton aria-label="Закрыть окно"><svg width="8" height="8"><path d="M1 1l6 6M7 1L1 7" stroke="#607084" strokeWidth="2" /></svg></MdiButton>
          </MdiButtons>
        </MenuBar>
        <Toolbars />
        <Body>
          <MarketWatch />
          <ChartPane>
            <ChartBox><Chart /></ChartBox>
            <TabStrip>
              <Tab $active $pad={10}>EURJPY,H4</Tab>
              <Tab $pad={11}>#BA,H1</Tab>
              <TabDivider />
              <Tab $pad={11}>#GE,M30</Tab>
              <TabDivider />
              <TabScroll>
                <svg width="5" height="7"><path d="M4 0v7L0 3.500z" fill="#808080" /></svg>
                <svg width="5" height="7"><path d="M0 0v7l4-3.500z" fill="#808080" /></svg>
              </TabScroll>
            </TabStrip>
          </ChartPane>
        </Body>
        <StatusBar>
          <StatusField>Для справки, нажмите F1</StatusField>
          <StatusField $w={218}>Default</StatusField>
          <StatusField $w={71} />
          <StatusField $w={71} />
          <StatusField $w={69} />
          <StatusField $w={70} />
          <StatusField $w={66} />
          <StatusField $w={161}>
            <svg width="24" height="12" shapeRendering="crispEdges">
              {[0, 1, 2, 3, 4, 5, 6, 7].map(i => (
                <g key={i}>
                  <rect x={i * 3} y="0" width="2" height={9 - i} fill="#5c7a00" />
                  <rect x={i * 3} y={10 - i} width="2" height={2 + i} fill="#8e1600" />
                </g>
              ))}
            </svg>
            <Traffic>9/0 kb</Traffic>
            <svg width="16" height="16"><path d="M0 16L16 0M4 16L16 4M8 16l8-8M12 16l4-4" stroke="#a0a0a0" strokeWidth="1.500" /></svg>
          </StatusField>
        </StatusBar>
      </Frame>
    </Window>
  );
}
